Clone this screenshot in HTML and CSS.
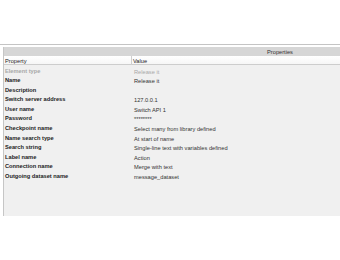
FILE: index.html
```html
<!DOCTYPE html>
<html>
<head>
<meta charset="utf-8">
<link rel="stylesheet" href="styles.css">
</head>
<body>
<div class="top"></div>
<div class="rule"></div>
<div class="panel">
  <div class="title">Properties</div>
  <div class="colhead">
    <div class="ch-prop">Property</div>
    <div class="ch-val">Value</div>
  </div>
  <div class="rows">
    <div class="row disabled"><div class="k">Element type</div><div class="v">Release it</div></div>
    <div class="row"><div class="k">Name</div><div class="v">Release it</div></div>
    <div class="row"><div class="k">Description</div><div class="v"></div></div>
    <div class="row"><div class="k">Switch server address</div><div class="v">127.0.0.1</div></div>
    <div class="row"><div class="k">User name</div><div class="v">Switch API 1</div></div>
    <div class="row"><div class="k">Password</div><div class="v">********</div></div>
    <div class="row"><div class="k">Checkpoint name</div><div class="v">Select many from library defined</div></div>
    <div class="row"><div class="k">Name search type</div><div class="v">At start of name</div></div>
    <div class="row"><div class="k">Search string</div><div class="v">Single-line text with variables defined</div></div>
    <div class="row"><div class="k">Label name</div><div class="v">Action</div></div>
    <div class="row"><div class="k">Connection name</div><div class="v">Merge with text</div></div>
    <div class="row"><div class="k">Outgoing dataset name</div><div class="v">message_dataset</div></div>
  </div>
</div>
</body>
</html>
```
FILE: styles.css
```css
html, body {
  margin: 0;
  padding: 0;
  background: #ffffff;
  width: 340px;
  height: 260px;
  overflow: hidden;
  font-family: "Liberation Sans", Arial, sans-serif;
  font-size: 5.7px;
  color: #2a2a2a;
}
.top { height: 44px; }
.rule { height: 0; border-top: 1px solid #c4c4c4; }
.panel {
  margin-top: 2px;
  margin-left: 3px;
  height: 169px;
  border-left: 1px solid #c6c6c6;
  display: flex;
  flex-direction: column;
}
.title {
  height: 9px;
  box-sizing: border-box;
  padding-top: 1px;
  padding-left: 216px;
  line-height: 9px;
  background: #d6d6d6;
  text-align: center;
  color: #333;
}
.colhead {
  height: 8px;
  border-bottom: 1px solid #cdcdcd;
  background: linear-gradient(#ffffff, #f6f6f6);
  display: grid;
  grid-template-columns: 128px 1fr;
  line-height: 9px;
  color: #222;
}
.ch-prop { padding-left: 1px; padding-top: 1px; border-right: 1px solid #d0d0d0; }
.ch-val { padding-left: 1px; padding-top: 1px; }
.rows {
  flex: 1;
  background: #f0f0f0;
}
.row {
  height: 9.6px;
  display: grid;
  grid-template-columns: 129px 1fr;
  line-height: 9px;
}
.k { padding-left: 1px; padding-top: 1.5px; font-weight: bold; color: #1c1c1c; }
.v { padding-left: 1px; padding-top: 2.5px; color: #333; }
.disabled .k, .disabled .v { color: #a8a8a8; }
```
